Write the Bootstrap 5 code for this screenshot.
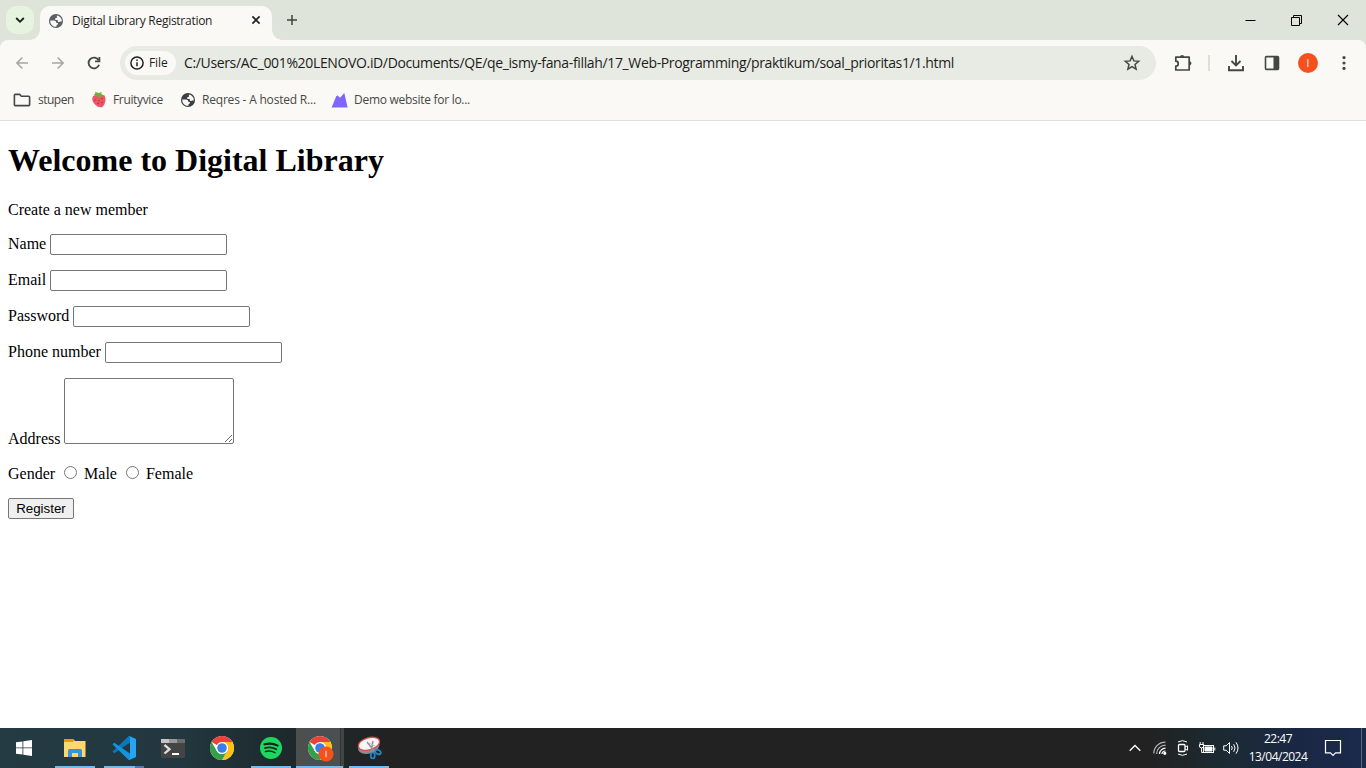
<!DOCTYPE html>
<html lang="en">
<head>
<meta charset="utf-8">
<meta name="viewport" content="width=device-width, initial-scale=1">
<title>Digital Library Registration</title>
<link href="https://cdn.jsdelivr.net/npm/bootstrap@5.3.0/dist/css/bootstrap.min.css" rel="stylesheet">
<style>
body{font-family:"Open Sans","Noto Sans",sans-serif;font-size:12px;line-height:16px;height:768px;overflow:hidden;color:#1f1f1f}
svg{display:block;flex:none}
.chrome-top{background:#dee4d9}
.tabstrip{height:40px}
.tab-search{width:28px;height:28px;margin:6px 6px 0 6px;border-radius:10px;background:#e5f3df}
.browser-tab{width:232px;height:34px;margin-top:6px;padding:0 10px 5px 8px;border-radius:10px 10px 0 0;background:#fbf9f5;position:relative}
.browser-tab::before,.browser-tab::after{content:"";position:absolute;bottom:0;width:10px;height:10px}
.browser-tab::before{left:-10px;background:radial-gradient(circle at 0 0,transparent 9.5px,#fbf9f5 10px)}
.browser-tab::after{right:-10px;background:radial-gradient(circle at 100% 0,transparent 9.5px,#fbf9f5 10px)}
.tab-title{letter-spacing:-.27px}
.new-tab{margin:15px 0 0 15px}
.toolbar{height:46px;padding-top:6px;background:#fbf9f5;border-radius:8px 8px 0 0}
.omnibox{width:1036px;height:34px;border-radius:17px;background:#e8eae4;padding:0 15px 0 5px}
.file-chip{width:51px;height:24px;border-radius:12px;background:#fbf9f5;padding-left:4px;gap:4px;font-weight:500;letter-spacing:-.1px}
.address{font-size:14px;line-height:20px;margin-left:8px;letter-spacing:-.354px;color:#1d1d1b}
.tool-sep{width:2px;height:16px;background:#d8e4d0}
.avatar{width:20px;height:20px;border-radius:50%;background:#f4511e;color:#fff;font-size:10px}
.bookmarks{height:35px;padding:0 0 7px 13px;background:#fbf9f5;border-bottom:1px solid #dfe0dd;color:#474747}
.bookmarks span{white-space:nowrap}
.page{height:607px;padding:21px 8px 0;font-family:"Liberation Serif",serif;font-size:16px;line-height:18px;color:#000;background:#fff}
.page h1{font-size:32px;line-height:37px;font-weight:700;margin:0 0 22px}
.form-line{gap:4px;margin-bottom:15px;line-height:18px}
.form-line label{margin-bottom:2px}
.plain-field{border:1px solid #767676;border-radius:2px;background:#fff;width:177px;height:21px;padding:1px 2px;display:block}
.plain-area{width:170px;height:66px;resize:both}
.plain-radio{width:13px;height:13px;margin:0;accent-color:#767676}
.plain-btn{border:1px solid #767676;border-radius:2px;background:#efefef;width:66px;height:21px;padding:0;font:13.333px/18px "Liberation Sans",sans-serif;color:#000}
.taskbar{height:40px;color:#fff;background:linear-gradient(90deg,#243b43 0,#22373f 180px,#1d2a2e 280px,#222 390px,#222 1150px,#1b2a33 1225px,#1a2744 1300px,#1b294b 100%)}
.start-cell{width:51px;padding-left:16px}
.task-cell{width:48px;margin-right:1px;position:relative}
.task-cell.open::after{content:"";position:absolute;left:4px;right:4px;bottom:0;height:2px;background:#76b9ed}
.task-cell.split::after{background:linear-gradient(90deg,#76b9ed 31px,#4b7da4 31px)}
.task-cell.current{background:linear-gradient(90deg,#4b4f50 44px,#303334 44px,#303334 45px,#434545 45px)}
.task-cell.current::after{left:0;right:1px}
.clock{width:64px;line-height:18px;letter-spacing:-.5px}
.desk-edge{width:1px;background:#5e6981}
</style>
</head>
<body>
<svg width="0" height="0" class="position-absolute">
<defs>
<g id="globe"><circle cx="8" cy="8" r="7" fill="currentColor"/><path d="M2.3 7.6H6.2Q8.4 7.8 8.5 10H10Q10.1 12 8.6 12.2L8.3 13.8Q4.4 13.8 2.7 10.4 2.2 9 2.3 7.6ZM8.9 2.4Q12.7 3.2 13.7 6.8V8.6H12.2Q11.6 9.4 10.2 8.9 9.6 8.2 9.7 7.1H7.6Q6.6 6.3 7.3 5.2L8.8 4.9Z" fill="#fbf9f5"/></g>
<g id="chromeLogo"><circle cx="12" cy="12" r="12" fill="#fff"/><path d="M12 12 1.6 6A12 12 0 0 1 22.4 6H12Z" fill="#ea4335"/><path d="M12 6h10.4A12 12 0 0 1 12 24l5.2-9A6 6 0 0 0 12 6Z" fill="#fbc116"/><path d="M1.6 6 6.8 15A6 6 0 0 0 17.2 15L12 24A12 12 0 0 1 1.6 6Z" fill="#34a04a"/><circle cx="12" cy="12" r="6" fill="#fff"/><circle cx="12" cy="12" r="4.8" fill="#3b7ded"/></g>
</defs>
</svg>

<header class="chrome-top">
 <div class="tabstrip d-flex">
  <div class="tab-search d-flex align-items-center justify-content-center"><svg width="10" height="8" viewBox="0 0 10 8" fill="none" stroke="#191d17" stroke-width="1.8"><path d="m1.2 2 3.8 3.8L8.8 2"/></svg></div>
  <div class="browser-tab d-flex align-items-center">
   <svg width="16" height="16" style="color:#5b5f66"><use href="#globe"/></svg>
   <span class="tab-title ms-2">Digital Library Registration</span>
   <svg class="ms-auto" width="12" height="12" viewBox="0 0 12 12" stroke="#1f1f1f" stroke-width="1.6"><path d="m2.4 1.4 7.2 7.2m0-7.2L2.4 8.6"/></svg>
  </div>
  <svg class="new-tab" width="10" height="10" viewBox="0 0 10 10" stroke="#3f453d" stroke-width="1.5"><path d="M0 5h10M5 0v10"/></svg>
  <div class="d-flex ms-auto align-items-center" style="gap:35px;padding-right:17px">
   <svg width="11" height="11" stroke="#000"><path d="M.5 5.5h10"/></svg>
   <svg width="11" height="11" fill="none" stroke="#000"><path d="M.5 2.5h8v8h-8zM2.5 2.5v-2h8v8h-2"/></svg>
   <svg width="12" height="12" viewBox="0 0 12 12" fill="none" stroke="#000" stroke-width="1.1"><path d="m1 1 10 10M11 1 1 11"/></svg>
  </div>
 </div>
 <nav class="toolbar d-flex">
  <div class="d-flex align-items-center" style="width:120px;height:34px;padding-left:14px;gap:20px">
   <svg width="16" height="16" viewBox="0 0 16 16" fill="none" stroke="#a5a7a2" stroke-width="1.6"><path d="M14 8H3m5.4-5.5L2.9 8l5.5 5.5"/></svg>
   <svg width="16" height="16" viewBox="0 0 16 16" fill="none" stroke="#a5a7a2" stroke-width="1.6"><path d="M2 8h11M7.6 2.5 13.1 8l-5.5 5.5"/></svg>
   <svg width="16" height="16" viewBox="0 0 16 16" fill="none" stroke="#424940" stroke-width="1.8"><path d="M13.1 9.7A5.4 5.4 0 1 1 12.7 5.3"/><path d="M13.4 2v4.3H9"/></svg>
  </div>
  <div class="omnibox d-flex align-items-center">
   <div class="file-chip d-flex align-items-center">
    <svg width="16" height="16" viewBox="0 0 16 16" fill="none" stroke="#1f1f1f" stroke-width="1.5"><circle cx="8" cy="8" r="6.1"/><path d="M8 7.2v4M8 4.6v1.5"/></svg><span>File</span>
   </div>
   <span class="address text-nowrap">C:/Users/AC_001%20LENOVO.iD/Documents/QE/qe_ismy-fana-fillah/17_Web-Programming/praktikum/soal_prioritas1/1.html</span>
   <svg class="ms-auto" width="18" height="18" viewBox="0 0 18 18" fill="none" stroke="#424940" stroke-width="1.5"><path d="m9 2.5 1.9 4.4 4.8.4L12 10.5l1.1 4.7L9 12.7l-4.1 2.5L6 10.5 2.3 7.3l4.8-.4Z"/></svg>
  </div>
  <div class="d-flex align-items-center" style="height:34px;padding-left:18px">
   <svg width="18" height="18" viewBox="0 0 18 18" fill="none" stroke="#424940" stroke-width="1.7"><path d="M15.2 3.2v12.8H1.8v-3.9a2.4 2.4 0 0 0 0-4.9V3.2Z" stroke-linejoin="round"/><path d="M6 3a2.1 2.1 0 0 1 4.2 0M15.4 7.2a2 2 0 0 1 0 4.1" fill="#424940" stroke="none"/></svg>
   <span class="tool-sep" style="margin:0 17px 0 16px"></span>
   <svg width="18" height="18" viewBox="0 0 18 18" fill="none" stroke="#424940" stroke-width="1.9"><path d="M9 1v10M4.5 7 9 11.4 13.5 7M2 12v4.2h14V12"/></svg>
   <svg style="margin-left:19px" width="16" height="16" viewBox="0 0 16 16"><rect x="1.5" y="1.6" width="13" height="12.8" rx="1" fill="none" stroke="#424940" stroke-width="1.6"/><path d="M9.5 1.5h5v13h-5z" fill="#424940"/></svg>
   <span class="avatar d-flex align-items-center justify-content-center" style="margin-left:18px">I</span>
   <svg style="margin-left:24px" width="4" height="16" viewBox="0 0 4 16" fill="#424940"><circle cx="2" cy="2.6" r="1.6"/><circle cx="2" cy="8" r="1.6"/><circle cx="2" cy="13.4" r="1.6"/></svg>
  </div>
 </nav>
 <div class="bookmarks d-flex align-items-center">
  <div class="d-flex align-items-center" style="width:78px;gap:7px"><svg width="18" height="14" viewBox="0 0 18 14" fill="none" stroke="#474747" stroke-width="1.6"><path d="M2.2 1.4h4.4l1.8 1.8h7.4q.8 0 .8.8v7.8q0 .8-.8.8H2.2q-.8 0-.8-.8V2.2q0-.8.8-.8Z"/></svg><span style="letter-spacing:-.5px">stupen</span></div>
  <div class="d-flex align-items-center" style="width:89px;gap:6px"><svg width="16" height="18" viewBox="0 0 16 18"><path d="M2 5.2C5 3.4 10 3 13.5 4.7c2 2.8.7 8.7-1.9 11-2 1.3-5 .2-7-1.7C1.7 11.4.3 7.9 2 5.2Z" fill="#ed5564"/><path d="m2.5 4 2-1.7L4 .7l2 .8L8 2l3-1-1 2 4 1.8-3.5.4L8 7.3 6.5 5.2Z" fill="#72ad38"/><path d="M4 8.5v1m4-.2v1M11 7v1m0 3v1m-4 0v1" stroke="#9d283b" stroke-width="1.2"/></svg><span style="letter-spacing:-.35px">Fruityvice</span></div>
  <div class="d-flex align-items-center" style="width:151px;gap:6px"><svg width="16" height="16" style="color:#3b3e42"><use href="#globe"/></svg><span style="letter-spacing:-.2px">Reqres - A hosted R...</span></div>
  <div class="d-flex align-items-center" style="gap:6px"><svg width="17" height="16" viewBox="0 0 17 16"><path d="M.6 15.5 5.2 4.2 6.6 3.4 9 5.7 13.3 1 16.6 15.5Z" fill="#8065ff"/></svg><span style="letter-spacing:-.28px">Demo website for lo...</span></div>
 </div>
</header>

<main class="page">
 <h1>Welcome to Digital Library</h1>
 <p style="margin-bottom:15px">Create a new member</p>
 <form>
  <div class="form-line d-flex align-items-center"><label>Name</label><input class="plain-field" type="text"></div>
  <div class="form-line d-flex align-items-center"><label>Email</label><input class="plain-field" type="email"></div>
  <div class="form-line d-flex align-items-center"><label>Password</label><input class="plain-field" type="password"></div>
  <div class="form-line d-flex align-items-center"><label>Phone number</label><input class="plain-field" type="text"></div>
  <div class="form-line d-flex align-items-end"><label style="margin-bottom:-4px">Address</label><textarea class="plain-field plain-area"></textarea></div>
  <div class="d-flex align-items-center" style="height:20px;margin:20px 0 14px"><label>Gender</label><input class="plain-radio" style="margin:-3px 7px 0 9px" type="radio" name="g"><label>Male</label><input class="plain-radio" style="margin:-3px 7px 0 9px" type="radio" name="g"><label>Female</label></div>
  <button class="plain-btn d-block" type="button">Register</button>
 </form>
</main>

<footer class="taskbar d-flex">
 <div class="start-cell d-flex align-items-center"><svg width="16" height="16" viewBox="0 0 16 16" fill="#fff"><path d="M0 2.3 6.5 1.4V7.5H0ZM7.3 1.3 16 0v7.5H7.3ZM0 8.3h6.5v6.2L0 13.7ZM7.3 8.3H16V16l-8.7-1.3Z"/></svg></div>
 <div class="task-cell open d-flex align-items-center justify-content-center"><svg width="22" height="20" viewBox="0 0 22 20"><path d="M0 1h9l2 2h10.5v16H0Z" fill="#ffd76a"/><path d="M0 1h9l1 1.5L9 4H0Z" fill="#e59b08"/><path d="M4 19v-6.5q0-1.5 1.5-1.5h11q1.5 0 1.5 1.5V19h-4v-4H8v4Z" fill="#3a94d9"/></svg></div>
 <div class="task-cell open split d-flex align-items-center justify-content-center"><svg width="24" height="24" viewBox="0 0 24 24"><path d="M.4 15.7 2.3 17.3 18 6.5V0h-1.3Z" fill="#0879bf"/><path d="M.4 8.3 2.3 6.7 18 17.5V24h-1.3Z" fill="#1593dc"/><path d="m17.3 0 6.2 2.8q.5.2.5.8v16.8q0 .6-.5.8L17.3 24q.7-.5.7-1.5v-21q0-1-.7-1.5Z" fill="#27a5f4"/></svg></div>
 <div class="task-cell d-flex align-items-center justify-content-center"><svg width="24" height="19" viewBox="0 0 24 19"><rect width="24" height="19" rx="1" fill="#444"/><path d="M0 0h8v4H0Z" fill="#c5c5c5"/><path d="M8 0h8v4H8Z" fill="#999"/><path d="M16 0h8v4h-8Z" fill="#6b6b6b"/><path d="m3.5 6 5 4.2-5 4.3" fill="none" stroke="#ddd" stroke-width="2.3"/><path d="M11 15h7" stroke="#fff" stroke-width="2"/></svg></div>
 <div class="task-cell d-flex align-items-center justify-content-center"><svg width="24" height="24" viewBox="0 0 24 24"><use href="#chromeLogo"/></svg></div>
 <div class="task-cell open d-flex align-items-center justify-content-center"><svg width="22" height="22" viewBox="0 0 22 22" fill="none" stroke="#13271b" stroke-linecap="round"><circle cx="11" cy="11" r="11" fill="#1ed760" stroke="none"/><path d="M4.5 7.3q7-2 13.2 1.3" stroke-width="2.2"/><path d="M5 11q6-1.7 11.3 1.2" stroke-width="1.8"/><path d="M5.5 14.5q5-1.3 9.5 1.1" stroke-width="1.5"/></svg></div>
 <div class="task-cell open current d-flex align-items-center justify-content-center"><svg class="overflow-visible" width="26" height="26" viewBox="0 0 26 26"><use href="#chromeLogo" x="1" y="1"/><circle cx="19" cy="19" r="7.6" fill="#f4511e"/><path d="M19 15.8v6.5" stroke="#f9c0ab" stroke-width="1.5"/></svg></div>
 <div class="task-cell open d-flex align-items-center justify-content-center"><svg width="26" height="24" viewBox="0 0 26 24"><ellipse cx="12.5" cy="11" rx="11" ry="6.7" fill="#8c8c8c" transform="rotate(-16 12 10)"/><ellipse cx="13" cy="7.8" rx="11" ry="6" fill="#f6f6f6" stroke="#dc4a54" stroke-width="1.3" transform="rotate(-16 13 8)"/><path d="m11 6 8 10M17 5l-2 11" stroke="#8b9296" stroke-width="1.4"/><path d="m13 7 6 3" stroke="#bbb"/><ellipse cx="16.8" cy="19.5" rx="2" ry="3" fill="none" stroke="#2588ca" stroke-width="1.7"/><ellipse cx="22" cy="16" rx="3" ry="2" fill="none" stroke="#2588ca" stroke-width="1.7" transform="rotate(30 22 16)"/></svg></div>

 <div class="d-flex align-items-center ms-auto">
  <svg style="margin-right:12px" width="12" height="8" fill="none" stroke="#fff" stroke-width="1.3"><path d="m.7 6.8 5.3-5.3 5.3 5.3"/></svg>
  <svg style="margin-right:10px" width="14" height="14" viewBox="0 0 14 14" fill="none" stroke="#fff" stroke-width="1.2"><g stroke="#b4b8ba"><path d="M.8 12.5C.8 6 6 1.2 12.5 1.2"/><path d="M3.6 13c0-5 4.2-8.9 9-8.9"/></g><path d="M6.5 13c0-3.3 2.8-5.8 6-5.8M9 13c0-1.8 1.5-3 3.5-3"/><circle cx="11.8" cy="12.3" r="1" fill="#fff"/></svg>
  <svg style="margin-right:10px" width="12" height="16" viewBox="0 0 12 16" fill="none" stroke="#fff"><rect x="1.5" y="4.5" width="6.5" height="7" rx="1" stroke-width="1.3"/><path d="m8 7 2.5-1.2v4.4L8 9M1 2Q5.5-.7 10 2M1 14q4.5 2.7 9 0"/></svg>
  <svg style="margin-right:7px" width="17" height="12" viewBox="0 0 17 12" fill="none" stroke="#fff"><rect x="4.5" y="3.5" width="10" height="7"/><path d="M6 5h7v4H6Z" fill="#fff"/><path d="M15.8 5.5v3M1.2 0v2.5M4 0v2.5M.5 2.5h4.2V5L2.6 6 .5 5ZM2.6 6v4.5h2"/></svg>
  <svg style="margin-right:6px" width="17" height="14" viewBox="0 0 17 14" fill="none" stroke="#fff"><path d="M.7 4.8h2.5L6.5 1.5v11L3.2 9.2H.7ZM8.5 5q1.5 2 0 4M10.7 3.2q2.7 3.8 0 7.6M13 1.3q4 5.7 0 11.4"/></svg>
  <div class="clock text-center"><div>22:47</div><div>13/04/2024</div></div>
  <svg style="margin:0 19px 0 14px" width="18" height="18" viewBox="0 0 18 18" fill="none" stroke="#fff" stroke-width="1.2"><path d="M1.5 1.5h15v12.3h-5L9 16.3l-2.5-2.5h-5Z"/></svg>
 </div>
 <div class="desk-edge"></div><div style="width:4px"></div>
</footer>
<script src="https://cdn.jsdelivr.net/npm/bootstrap@5.3.0/dist/js/bootstrap.bundle.min.js"></script>
</body>
</html>
